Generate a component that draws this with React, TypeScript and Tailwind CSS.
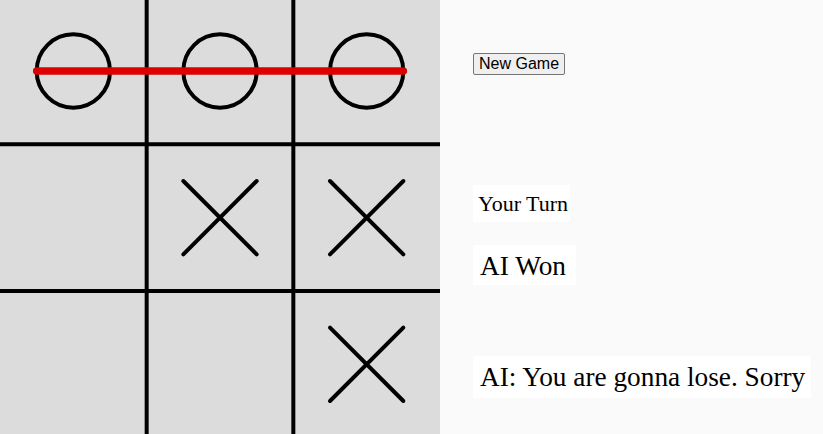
import React from "react";

const C = 440 / 3;
const OY = -2.33;

function Cross({ col, row }: { col: number; row: number }) {
  const cx = C * col + C / 2;
  const cy = C * row + C / 2 + OY;
  const d = C / 4;
  return (
    <g stroke="#000" strokeWidth={4} strokeLinecap="round">
      <line x1={cx - d} y1={cy - d} x2={cx + d} y2={cy + d} />
      <line x1={cx + d} y1={cy - d} x2={cx - d} y2={cy + d} />
    </g>
  );
}

function Nought({ col, row }: { col: number; row: number }) {
  const cx = C * col + C / 2;
  const cy = C * row + C / 2 + OY;
  return <circle cx={cx} cy={cy} r={C / 4} fill="none" stroke="#000" strokeWidth={4} />;
}

export default function App() {
  return (
    <div className="flex w-[823px] h-[434px] overflow-hidden bg-[#fafafa]" style={{ fontFamily: '"Liberation Serif", serif' }}>
      <svg width={440} height={434} className="shrink-0 block">
        <rect x={0} y={0} width={440} height={434} fill="#dcdcdc" />
        <g stroke="#000" strokeWidth={4}>
          <line x1={C} y1={0} x2={C} y2={434} />
          <line x1={2 * C} y1={0} x2={2 * C} y2={434} />
          <line x1={0} y1={C + OY} x2={440} y2={C + OY} />
          <line x1={0} y1={2 * C + OY} x2={440} y2={2 * C + OY} />
        </g>
        <Nought col={0} row={0} />
        <Nought col={1} row={0} />
        <Nought col={2} row={0} />
        <Cross col={1} row={1} />
        <Cross col={2} row={1} />
        <Cross col={2} row={2} />
        <line x1={C / 4} y1={C / 2 + OY} x2={440 - C / 4} y2={C / 2 + OY} stroke="#dd0000" strokeWidth={7.5} strokeLinecap="round" />
      </svg>
      <div className="flex flex-col items-start pl-[33px]">
        <button
          className="mt-[53px] h-[22px] px-[5px] border border-[#767676] bg-[#efefef] rounded-[2px] text-[16px] leading-[18px] text-black"
          style={{ fontFamily: '"Liberation Sans", Arial, sans-serif' }}
        >
          New Game
        </button>
        <div className="mt-[110px] h-[37px] bg-white pl-[5px] pr-[2px] text-[22px] leading-[37px] text-black">Your Turn</div>
        <div className="mt-[23px] h-[40px] bg-white pl-[7px] pr-[10px] text-[27.3px] leading-[42px] text-black">AI Won</div>
        <div className="mt-[71px] h-[42px] bg-white pl-[7px] pr-[6px] text-[27.3px] leading-[42px] text-black">AI: You are gonna lose. Sorry</div>
      </div>
    </div>
  );
}
